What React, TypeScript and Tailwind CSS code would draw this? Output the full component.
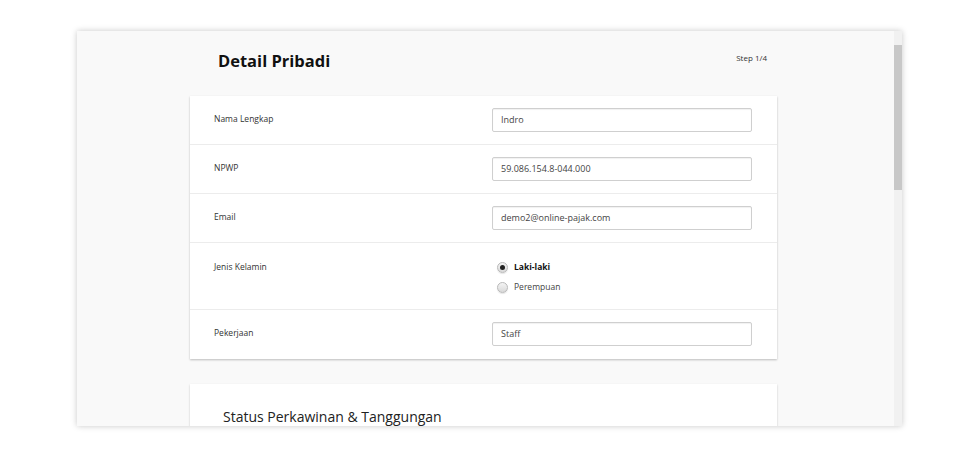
import React from "react";

function Row({ label, value }: { label: string; value: string }) {
  return (
    <div className="flex h-[49px] border-b border-[#ececec]">
      <div className="w-[302px] pl-[24px] pt-[17px] text-[8.5px] leading-[12px] text-[#333]">{label}</div>
      <div className="mt-[12px] w-[260px] h-[24px] border border-[#cfcfcf] rounded-[2px] px-[8px] text-[9px] leading-[22px] text-[#444] shadow-[inset_0_1px_1px_rgba(0,0,0,0.06)]">
        {value}
      </div>
    </div>
  );
}

function Radio({ checked, label }: { checked?: boolean; label: string }) {
  return (
    <div className="flex items-center gap-[6px] h-[10px]">
      <div className="w-[11px] h-[11px] rounded-full border border-[#b9b9b9] bg-[linear-gradient(#f4f4f4,#d9d9d9)] flex items-center justify-center shadow-[0_1px_1px_rgba(0,0,0,0.1)]">
        {checked && <div className="w-[5px] h-[5px] rounded-full bg-[#222]" />}
      </div>
      <span className={checked ? "text-[8.5px] font-bold text-[#111]" : "text-[8.5px] text-[#444]"}>{label}</span>
    </div>
  );
}

export default function App() {
  return (
    <div className="w-[960px] h-[465px] bg-white pt-[31px] pl-[77px] overflow-hidden font-['Open_Sans',sans-serif]">
      <div className="w-[825px] h-[395px] flex overflow-hidden bg-[#f9f9f9] shadow-[0_0_6px_rgba(0,0,0,0.22)]">
        <div className="flex-1 overflow-hidden">
          <div className="ml-[113px] w-[587px]">
            <div className="flex justify-between h-[65px] pt-[18px] pl-[28px] pr-[10px]">
              <div className="text-[16.5px] font-bold leading-[23px] text-[#111]">Detail Pribadi</div>
              <div className="text-[8px] leading-[11px] mt-[3px] text-[#333]">Step 1/4</div>
            </div>
            <div className="bg-white shadow-[0_1px_2px_rgba(0,0,0,0.25)]">
              <Row label="Nama Lengkap" value="Indro" />
              <Row label="NPWP" value="59.086.154.8-044.000" />
              <Row label="Email" value="demo2@online-pajak.com" />
              <div className="flex h-[67px] border-b border-[#ececec]">
                <div className="w-[302px] pl-[24px] pt-[18px] text-[8.5px] leading-[12px] text-[#333]">Jenis Kelamin</div>
                <div className="pt-[19px] pl-[5px] flex flex-col gap-[10px]">
                  <Radio checked label="Laki-laki" />
                  <Radio label="Perempuan" />
                </div>
              </div>
              <div className="flex h-[49px]">
                <div className="w-[302px] pl-[24px] pt-[17px] text-[8.5px] leading-[12px] text-[#333]">Pekerjaan</div>
                <div className="mt-[12px] w-[260px] h-[24px] border border-[#cfcfcf] rounded-[2px] px-[8px] text-[9px] leading-[22px] text-[#444] shadow-[inset_0_1px_1px_rgba(0,0,0,0.06)]">
                  Staff
                </div>
              </div>
            </div>
            <div className="mt-[25px] h-[120px] bg-white shadow-[0_1px_2px_rgba(0,0,0,0.2)] pt-[23px] pl-[33px]">
              <div className="text-[14px] leading-[20px] text-[#222]">Status Perkawinan &amp; Tanggungan</div>
            </div>
          </div>
        </div>
        <div className="w-[8px] bg-[#f1f1f1]">
          <div className="mt-[14px] h-[145px] bg-[#c8c8c8]" />
        </div>
      </div>
    </div>
  );
}
